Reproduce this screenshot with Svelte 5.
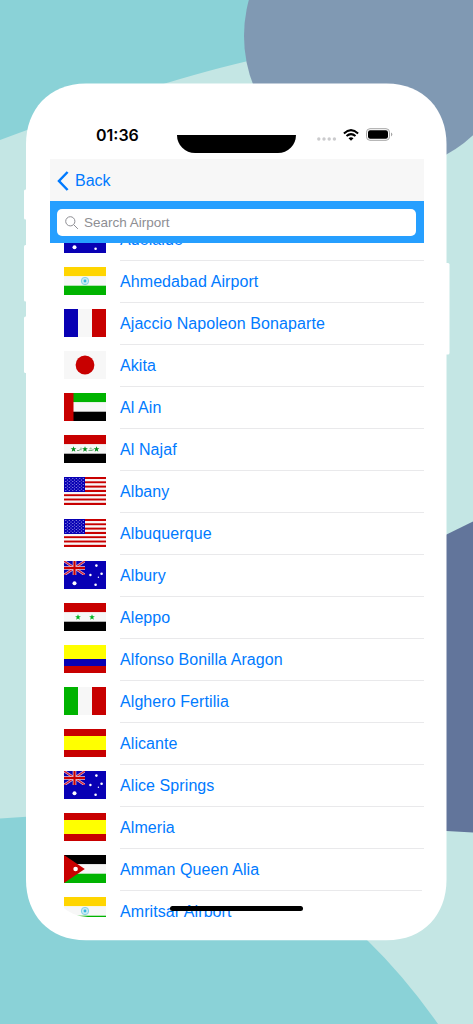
<script lang="ts">
  type Airport = { name: string; country: string };

  const airports: Airport[] = [
    { name: 'Adelaide', country: 'au' },
    { name: 'Ahmedabad Airport', country: 'in' },
    { name: 'Ajaccio Napoleon Bonaparte', country: 'fr' },
    { name: 'Akita', country: 'jp' },
    { name: 'Al Ain', country: 'ae' },
    { name: 'Al Najaf', country: 'iq' },
    { name: 'Albany', country: 'us' },
    { name: 'Albuquerque', country: 'us' },
    { name: 'Albury', country: 'au' },
    { name: 'Aleppo', country: 'sy' },
    { name: 'Alfonso Bonilla Aragon', country: 'co' },
    { name: 'Alghero Fertilia', country: 'it' },
    { name: 'Alicante', country: 'es' },
    { name: 'Alice Springs', country: 'au' },
    { name: 'Almeria', country: 'es' },
    { name: 'Amman Queen Alia', country: 'jo' },
    { name: 'Amritsar Airport', country: 'in' },
  ];

  // colour, start and size of each stripe, on a 42x28 flag
  const rows: Record<string, [string, number, number][]> = {
    in: [['#ffd500', 0, 9.3], ['#f7f7f7', 9.3, 9.4], ['#00b300', 18.7, 9.3]],
    ae: [['#00b300', 0, 9.3], ['#f7f7f7', 9.3, 9.4], ['#000', 18.7, 9.3]],
    iq: [['#c80000', 0, 9.3], ['#f7f7f7', 9.3, 9.4], ['#000', 18.7, 9.3]],
    sy: [['#c80000', 0, 9.3], ['#f7f7f7', 9.3, 9.4], ['#000', 18.7, 9.3]],
    jo: [['#000', 0, 9.3], ['#f7f7f7', 9.3, 9.4], ['#00b300', 18.7, 9.3]],
    co: [['#ffff00', 0, 14], ['#0800b4', 14, 7], ['#c80000', 21, 7]],
    es: [['#c80000', 0, 7], ['#ffff00', 7, 14], ['#c80000', 21, 7]],
    jp: [['#f7f7f7', 0, 28]],
    au: [['#0800b4', 0, 28]],
  };

  const columns: Record<string, string[]> = {
    fr: ['#0800b4', '#f7f7f7', '#c80000'],
    it: ['#00b300', '#f7f7f7', '#c80000'],
  };

  const usStripes = Array.from({ length: 13 }, (_, i) => i);
  const usStars = Array.from({ length: 9 }, (_, r) =>
    Array.from({ length: r % 2 ? 5 : 6 }, (_, c) => ({
      x: (r % 2 ? 3.5 : 1.8) + c * 3.5,
      y: 1.5 + r * 1.5,
    })),
  ).flat();
  const star = 'M0-3 .8-.9 2.9-.9 1.2.4 1.8 2.5 0 1.2-1.8 2.5-1.2.4-2.9-.9-.8-.9Z';
</script>

{#snippet flag(country: string)}
  <svg class="flag" viewBox="0 0 42 28" aria-hidden="true">
    {#each rows[country] ?? [] as [fill, y, height]}
      <rect {fill} {y} {height} width="42" />
    {/each}
    {#each columns[country] ?? [] as fill, i}
      <rect {fill} x={i * 14} width="14" height="28" />
    {/each}

    {#if country === 'in'}
      <circle cx="21" cy="14" r="3.7" fill="#cbeaf3" stroke="#72cbe5" stroke-width=".8" />
      <circle cx="21" cy="14" r="1.4" fill="#35b5de" />
    {:else if country === 'jp'}
      <circle cx="21" cy="14" r="9.4" fill="#c80000" />
    {:else if country === 'ae'}
      <rect width="9.5" height="28" fill="#c80000" />
    {:else if country === 'iq'}
      {#each [9.5, 21, 32.5] as x}
        <path d={star} transform="translate({x} 14.2)" fill="#008c1a" />
      {/each}
      <path
        d="M13 15.5h2.5M16 14v1M17 15.3v-2.7M24.5 15.5h4M25.5 13.8l1-.7M27 12.8v1.8M29 13.8v1.6"
        stroke="#4d9d5b"
        stroke-width=".8"
        fill="none"
      />
    {:else if country === 'sy'}
      <path d={star} transform="translate(14 14.2)" fill="#00b31e" />
      <path d={star} transform="translate(28 14.2)" fill="#00b31e" />
    {:else if country === 'jo'}
      <path d="M0 0 20.8 14 0 28Z" fill="#c80000" />
      <circle cx="11.6" cy="14" r="2.3" fill="#fff" />
    {:else if country === 'us'}
      <rect width="42" height="28" fill="#fff" />
      {#each usStripes as i}
        <rect y={(i * 28) / 13} width="42" height={28 / 13} fill={i % 2 ? '#f7f7f7' : '#c80000'} />
      {/each}
      <rect width="21" height="15" fill="#0800b4" />
      {#each usStars as s}
        <circle cx={s.x} cy={s.y} r=".6" fill="#aaa7ed" />
      {/each}
    {:else if country === 'au'}
      <svg width="21" height="14" viewBox="0 0 21 14">
        <path d="M0 0 21 14M21 0 0 14" stroke="#d9bfe0" stroke-width="2.6" />
        <path d="M0 0 21 14M21 0 0 14" stroke="#d21e2f" stroke-width="1.3" />
        <path d="M10.5 0v14M0 7h21" stroke="#ecc6d2" stroke-width="3.6" />
        <path d="M10.5 0v14M0 7h21" stroke="#c80000" stroke-width="2.1" />
      </svg>
      <g fill="#fff">
        <circle cx="10.5" cy="22.2" r="2" />
        <circle cx="32.4" cy="4.6" r="1.3" />
        <circle cx="26.4" cy="14" r="1.2" />
        <circle cx="37.6" cy="12.8" r="1.3" />
        <circle cx="34.4" cy="16.3" r=".7" />
        <circle cx="31.6" cy="23.7" r="1.3" />
      </g>
    {/if}
  </svg>
{/snippet}

<main class="stage">
  <svg class="backdrop" viewBox="0 0 473 1024" aria-hidden="true">
    <rect width="473" height="1024" fill="#c4e6e4" />
    <path d="M0 0H300V50L246 61.5Q150 84 0 140Z" fill="#8ad2d7" />
    <circle cx="380" cy="36" r="136" fill="#8099b3" />
    <path d="M420 547.5 473 521.5V832.5L420 829.5Z" fill="#62759b" />
    <path d="M0 818.5Q230 800 367.5 940.5Q405 977 438 1024H0Z" fill="#8ad2d7" />
    <g fill="#fff">
      <rect x="24" y="189.5" width="6" height="30" rx="1.5" />
      <rect x="24" y="245" width="6" height="56.5" rx="1.5" />
      <rect x="24" y="316.5" width="6" height="56.5" rx="1.5" />
      <rect x="443" y="263" width="6.5" height="91.5" rx="1.5" />
      <path d="M86 83.5H386.5C424 83.5 446.5 110 446.5 144V880C446.5 914 424 940.3 386.5 940.3H86C48.5 940.3 26 914 26 880V144C26 110 48.5 83.5 86 83.5Z" />
    </g>
  </svg>

  <div class="screen">
    <header class="status-bar">
      <span class="time">01:36</span>
      <div class="notch"></div>
      <div class="indicators">
        <svg width="20" height="4" viewBox="0 0 20 4" class="signal" aria-hidden="true">
          {#each [1.8, 7, 12.2, 17.4] as cx}
            <circle {cx} cy="2" r="1.7" fill="#cbcbcd" />
          {/each}
        </svg>
        <svg width="16" height="12" viewBox="0 0 16 12" class="wifi" aria-hidden="true">
          <g fill="none" stroke="#000" stroke-width="2">
            <path d="M.9 4.4Q8-2.2 15.1 4.4" />
            <path d="M3.5 7.1Q8 3.1 12.5 7.1" />
          </g>
          <path d="M5.5 9.2Q8 7.2 10.5 9.2L8 11.8Z" />
        </svg>
        <svg width="27" height="13" viewBox="0 0 27 13" class="battery" aria-hidden="true">
          <rect x=".5" y=".7" width="23" height="11.6" rx="3.5" fill="none" stroke="#a5a5a5" />
          <rect x="2" y="2.2" width="20" height="8.6" rx="2.2" />
          <path d="M25 4.6Q26.3 5.2 26.3 6.5T25 8.4Z" fill="#a5a5a5" />
        </svg>
      </div>
    </header>

    <nav class="nav-bar">
      <button type="button" class="back">
        <svg width="12" height="20" viewBox="0 0 12 20" aria-hidden="true">
          <path d="M10.6 1 2 10l8.6 9" fill="none" stroke="#007aff" stroke-width="2.5" />
        </svg>
        Back
      </button>
    </nav>

    <div class="search-bar">
      <label class="search-field">
        <svg width="14" height="14" viewBox="0 0 14 14" aria-hidden="true">
          <g fill="none" stroke="#8e8e93">
            <circle cx="5.3" cy="5.3" r="4.6" />
            <path d="m8.7 8.7 4.2 4.2" />
          </g>
        </svg>
        <input type="text" placeholder="Search Airport" />
      </label>
    </div>

    <ul class="airports">
      {#each airports as airport}
        <li>
          {@render flag(airport.country)}
          <span class="name">{airport.name}</span>
        </li>
      {/each}
    </ul>
    <div class="home-indicator"></div>
  </div>
</main>

<style>
  :global(body) {
    margin: 0;
    background: #c4e6e4;
  }

  .stage {
    position: relative;
    box-sizing: border-box;
    width: 473px;
    height: 1024px;
    padding: 84px 49px 0 50px;
    overflow: hidden;
    font-family: 'Liberation Sans', Arial, sans-serif;
  }

  .backdrop {
    position: absolute;
    inset: 0;
    width: 473px;
    height: 1024px;
  }

  .screen {
    position: relative;
    display: flex;
    flex-direction: column;
    width: 374px;
    height: 833px;
    border-radius: 0 0 38px 38px;
    overflow: hidden;
  }

  .status-bar {
    display: grid;
    grid-template-columns: 127px 119px 128px;
    align-items: start;
    flex: none;
    height: 75px;
  }

  .time {
    padding: 41px 0 0 46px;
    font: 600 16px/20px Inter, sans-serif;
  }

  .notch {
    height: 18px;
    margin-top: 51px;
    border-radius: 0 0 18px 18px;
    background: #000;
  }

  .indicators {
    display: flex;
    align-items: flex-start;
    padding: 44px 0 0 21px;
  }

  .signal {
    margin-top: 9px;
  }

  .wifi {
    margin: 1px 7px 0 6px;
  }

  .nav-bar {
    display: flex;
    align-items: center;
    box-sizing: border-box;
    flex: none;
    height: 42px;
    padding-top: 2px;
    background: #f7f7f7;
  }

  .back {
    display: flex;
    align-items: center;
    gap: 6px;
    padding: 0 7px;
    border: 0;
    background: none;
    color: #007aff;
    font: 16px/20px 'Liberation Sans', Arial, sans-serif;
  }

  .search-bar {
    flex: none;
    box-sizing: border-box;
    height: 42px;
    padding: 8px 8px 7px 7px;
    background: #269fff;
  }

  .search-field {
    display: flex;
    align-items: center;
    gap: 5px;
    height: 27px;
    padding: 0 8px;
    border-radius: 5px;
    background: #fff;
  }

  input {
    flex: 1;
    min-width: 0;
    padding: 0;
    border: 0;
    outline: 0;
    background: none;
    font: 13.5px/18px 'Liberation Sans', Arial, sans-serif;
  }

  input::placeholder {
    color: #8e8e93;
    opacity: 1;
  }

  .airports {
    flex: 1;
    min-height: 0;
    margin: 0;
    padding: 0;
    overflow: hidden;
    list-style: none;
  }

  li {
    display: flex;
    gap: 14px;
    height: 42px;
    padding-left: 14px;
  }

  li:first-child {
    margin-top: -24px;
  }

  .flag {
    flex: none;
    width: 42px;
    height: 28px;
    margin-top: 6px;
  }

  .name {
    flex: 1;
    border-bottom: 1px solid #e9e9eb;
    color: #007aff;
    font-size: 16px;
    letter-spacing: 0.08px;
    line-height: 42px;
    white-space: nowrap;
  }

  .home-indicator {
    position: absolute;
    left: 120px;
    bottom: 6px;
    width: 133px;
    height: 5px;
    border-radius: 3px;
    background: #000;
  }
</style>
